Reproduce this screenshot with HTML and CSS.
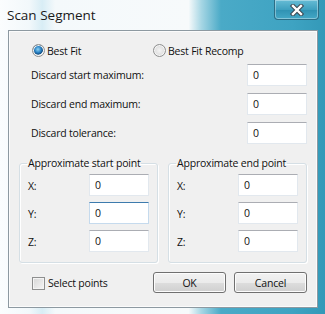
FILE: index.html
```html
<!DOCTYPE html>
<html lang="en">
<head>
    <meta charset="UTF-8">
    <title>Scan Segment</title>
    <link rel="stylesheet" href="styles.css">
</head>
<body>
    <div class="window">
        <div class="titlebar">
            <span class="title">Scan Segment</span>
            <div class="close-btn">
                <svg width="18" height="12" viewBox="0 0 18 12">
                    <path d="M5 2L13 10M13 2L5 10" stroke="#3c4650" stroke-width="4.4" stroke-linecap="square" fill="none"/>
                    <path d="M5 2L13 10M13 2L5 10" stroke="#ffffff" stroke-width="2.4" stroke-linecap="square" fill="none"/>
                </svg>
            </div>
        </div>

        <div class="client">
            <div class="radios">
                <label class="radio-item first">
                    <span class="radio checked"></span>
                    Best Fit
                </label>
                <label class="radio-item">
                    <span class="radio"></span>
                    Best Fit Recomp
                </label>
            </div>

            <div class="fields">
                <span class="field-label">Discard start maximum:</span>
                <div class="textbox">0</div>
                <span class="field-label">Discard end maximum:</span>
                <div class="textbox">0</div>
                <span class="field-label">Discard tolerance:</span>
                <div class="textbox">0</div>
            </div>

            <div class="groups">
                <fieldset class="group">
                    <legend>Approximate start point</legend>
                    <div class="coords">
                        <span>X:</span>
                        <div class="textbox">0</div>
                        <span>Y:</span>
                        <div class="textbox focused">0</div>
                        <span>Z:</span>
                        <div class="textbox">0</div>
                    </div>
                </fieldset>
                <fieldset class="group">
                    <legend>Approximate end point</legend>
                    <div class="coords">
                        <span>X:</span>
                        <div class="textbox">0</div>
                        <span>Y:</span>
                        <div class="textbox">0</div>
                        <span>Z:</span>
                        <div class="textbox">0</div>
                    </div>
                </fieldset>
            </div>

            <div class="footer">
                <label class="check-item">
                    <span class="checkbox"></span>
                    Select points
                </label>
                <div class="buttons">
                    <button class="btn">OK</button>
                    <button class="btn">Cancel</button>
                </div>
            </div>
        </div>
    </div>
</body>
</html>
```

FILE: styles.css
```css
body {
    margin: 0;
    font-family: 'Open Sans', 'Noto Sans', sans-serif;
    font-size: 10.5px;
    letter-spacing: -0.2px;
    color: #111;
    background: #fff;
}

.window {
    width: 325px;
    height: 314px;
    box-sizing: border-box;
    display: flex;
    flex-direction: column;
    padding: 0 7px 6px 8px;
    background:
        linear-gradient(90deg,
            #fbfdfe 0,
            #f2f8fb 9%,
            #d8edf5 13%,
            #f4f9fb 17%,
            #f7fafb 58%,
            #a6d6e4 62%,
            #4aaac7 68%,
            #3ea3c2 90%,
            #3399b8 100%);
}

.titlebar {
    height: 30px;
    display: flex;
    justify-content: space-between;
    align-items: flex-start;
}

.title {
    font-size: 13.5px;
    letter-spacing: 0;
    color: #1a1a1a;
    margin-top: 6px;
    margin-left: -1px;
}

.close-btn {
    width: 43px;
    height: 19px;
    margin-right: -1px;
    border: 1px solid #2c6d85;
    border-top: none;
    border-radius: 0 0 4px 4px;
    background: linear-gradient(#67bcd5, #3fa0bf 50%, #2f91b2 51%, #44a8c6);
    box-shadow: inset 0 0 0 1px rgba(255, 255, 255, 0.35);
    display: flex;
    justify-content: center;
    align-items: center;
}

.client {
    flex: 1;
    background: #f0f0f0;
    border: 1px solid #8d99a1;
    box-shadow: inset 0 0 0 1px #fbfbfb;
    display: flex;
    flex-direction: column;
}

.radios {
    display: flex;
    align-items: center;
    margin: 13px 0 0 23px;
    height: 13px;
}

.radio-item {
    display: flex;
    align-items: center;
    gap: 2px;
}

.radio-item.first {
    width: 121px;
}

.radio {
    width: 11px;
    height: 11px;
    border-radius: 50%;
    border: 1px solid #8e8f8f;
    background: radial-gradient(circle, #f4f4f4 0, #dcdcdc 70%, #cfcfcf 100%);
    box-shadow: inset 0 0 0 1px #f6f6f6;
}

.radio.checked {
    background: radial-gradient(circle at 45% 40%, #8fd4f4 0, #2b83c5 35%, #104d82 55%, #e4eaef 62%, #f2f2f2 100%);
}

.fields {
    display: grid;
    grid-template-columns: 216px 60px;
    row-gap: 7px;
    align-items: center;
    margin: 7px 9px 0 22px;
}

.textbox {
    height: 22px;
    box-sizing: border-box;
    background: #fff;
    border: 1px solid #e2e8ee;
    border-top-color: #abadb3;
    padding: 3px 0 0 5px;
    line-height: 14px;
}

.textbox.focused {
    border-color: #c5daed;
    border-top-color: #3d7bad;
}

.groups {
    display: flex;
    gap: 10px;
    margin: 12px 10px 0 10px;
}

.group {
    width: 139px;
    height: 107px;
    box-sizing: border-box;
    margin: 0;
    padding: 0 8px;
    border: 1px solid #d5dfe5;
    border-radius: 3px;
    box-shadow: inset 1px 1px 0 #fff, 1px 1px 0 #fff;
    min-width: 0;
}

.group legend {
    padding: 0 1px;
    margin-left: -1px;
    line-height: 14px;
    white-space: nowrap;
}

.coords {
    display: grid;
    grid-template-columns: 61px 60px;
    row-gap: 6px;
    align-items: center;
    margin-top: 4px;
}

.coords span {
    padding-top: 2px;
}

.footer {
    display: flex;
    justify-content: space-between;
    align-items: center;
    margin: 9px 10px 0 23px;
}

.check-item {
    display: flex;
    align-items: center;
    gap: 3px;
    margin-top: 1px;
}

.checkbox {
    width: 11px;
    height: 11px;
    border: 1px solid #8e8f8f;
    background: linear-gradient(135deg, #d6d6d6, #f6f6f6);
    box-shadow: inset 0 0 0 1px #f4f4f4;
}

.buttons {
    display: flex;
    gap: 8px;
}

.btn {
    width: 73px;
    height: 21px;
    font-family: inherit;
    font-size: 10.5px;
    letter-spacing: -0.2px;
    color: #111;
    border: 1px solid #707070;
    border-radius: 3px;
    background: linear-gradient(#f2f2f2, #ebebeb 50%, #dddddd 51%, #cfcfcf);
    box-shadow: inset 0 0 0 1px #fcfcfc;
    padding: 0;
}
```
